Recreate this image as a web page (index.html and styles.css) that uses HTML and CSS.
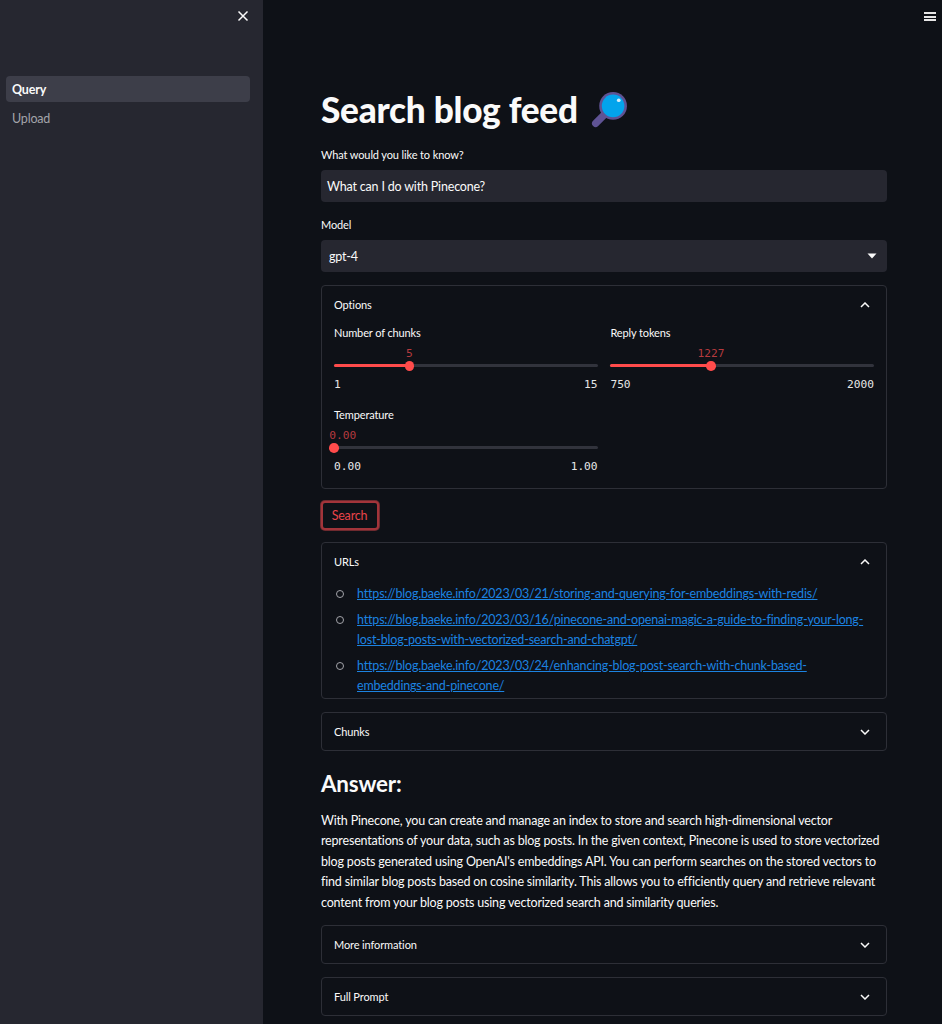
FILE: index.html
```html
<!DOCTYPE html>
<html>
<head>
    <title>Search blog feed</title>
    <link rel="stylesheet" href="styles.css">
</head>
<body>
    <div class="app">
        <aside class="sidebar">
            <button class="close-button" aria-label="Close">
                <svg viewBox="0 0 12 12" width="12" height="12"><path d="M1.5 1.5l9 9M10.5 1.5l-9 9" stroke="#fafafa" stroke-width="1.5" fill="none"/></svg>
            </button>
            <nav class="nav">
                <a class="nav-item active">Query</a>
                <a class="nav-item">Upload</a>
            </nav>
        </aside>

        <main class="main">
            <div class="menu-icon"><span></span><span></span><span></span></div>
            <div class="content">
                <h1>Search blog feed
                    <svg class="emoji" viewBox="0 0 36 36" width="37" height="37">
                        <path d="M14 22L4.5 31.5" stroke="#5f5394" stroke-width="7" stroke-linecap="round"/>
                        <circle cx="21.5" cy="14.5" r="13.5" fill="#5f5394"/>
                        <circle cx="21.5" cy="14.5" r="11" fill="#03a4ec"/>
                        <circle cx="27" cy="9" r="1.8" fill="#d5effb"/>
                    </svg>
                </h1>

                <label class="field-label">What would you like to know?</label>
                <div class="input">What can I do with Pinecone?</div>

                <label class="field-label model-label">Model</label>
                <div class="input select">
                    <span>gpt-4</span>
                    <svg viewBox="0 0 10 6" width="10" height="6"><path d="M0.5 0.5h9L5 5.5z" fill="#fafafa"/></svg>
                </div>

                <section class="expander options">
                    <div class="expander-head">
                        <span>Options</span>
                        <svg class="chevron" viewBox="0 0 10 6" width="10" height="6"><path d="M1 5l4-4 4 4" stroke="#fafafa" stroke-width="1.5" fill="none"/></svg>
                    </div>
                    <div class="sliders">
                        <div class="slider">
                            <div class="field-label">Number of chunks</div>
                            <div class="track">
                                <div class="fill" style="width: 28.6%"></div>
                                <div class="thumb" style="left: 28.6%"><span class="thumb-value">5</span></div>
                            </div>
                            <div class="range"><span>1</span><span>15</span></div>
                        </div>
                        <div class="slider">
                            <div class="field-label">Reply tokens</div>
                            <div class="track">
                                <div class="fill" style="width: 38.2%"></div>
                                <div class="thumb" style="left: 38.2%"><span class="thumb-value">1227</span></div>
                            </div>
                            <div class="range"><span>750</span><span>2000</span></div>
                        </div>
                        <div class="slider">
                            <div class="field-label">Temperature</div>
                            <div class="track">
                                <div class="fill" style="width: 0%"></div>
                                <div class="thumb" style="left: 0%"><span class="thumb-value at-start">0.00</span></div>
                            </div>
                            <div class="range"><span>0.00</span><span>1.00</span></div>
                        </div>
                    </div>
                </section>

                <button class="search-button">Search</button>

                <section class="expander urls">
                    <div class="expander-head">
                        <span>URLs</span>
                        <svg class="chevron" viewBox="0 0 10 6" width="10" height="6"><path d="M1 5l4-4 4 4" stroke="#fafafa" stroke-width="1.5" fill="none"/></svg>
                    </div>
                    <ul class="url-list">
                        <li><a href="#">https://blog.baeke.info/2023/03/21/storing-and-querying-for-embeddings-with-redis/</a></li>
                        <li><a href="#">https://blog.baeke.info/2023/03/16/pinecone-and-openai-magic-a-guide-to-finding-your-long-lost-blog-posts-with-vectorized-search-and-chatgpt/</a></li>
                        <li><a href="#">https://blog.baeke.info/2023/03/24/enhancing-blog-post-search-with-chunk-based-embeddings-and-pinecone/</a></li>
                    </ul>
                </section>

                <section class="expander closed">
                    <div class="expander-head">
                        <span>Chunks</span>
                        <svg class="chevron" viewBox="0 0 10 6" width="10" height="6"><path d="M1 1l4 4 4-4" stroke="#fafafa" stroke-width="1.5" fill="none"/></svg>
                    </div>
                </section>

                <h2>Answer:</h2>
                <p class="answer">With Pinecone, you can create and manage an index to store and search high-dimensional vector representations of your data, such as blog posts. In the given context, Pinecone is used to store vectorized blog posts generated using OpenAI's embeddings API. You can perform searches on the stored vectors to find similar blog posts based on cosine similarity. This allows you to efficiently query and retrieve relevant content from your blog posts using vectorized search and similarity queries.</p>

                <section class="expander closed">
                    <div class="expander-head">
                        <span>More information</span>
                        <svg class="chevron" viewBox="0 0 10 6" width="10" height="6"><path d="M1 1l4 4 4-4" stroke="#fafafa" stroke-width="1.5" fill="none"/></svg>
                    </div>
                </section>

                <section class="expander closed">
                    <div class="expander-head">
                        <span>Full Prompt</span>
                        <svg class="chevron" viewBox="0 0 10 6" width="10" height="6"><path d="M1 1l4 4 4-4" stroke="#fafafa" stroke-width="1.5" fill="none"/></svg>
                    </div>
                </section>
            </div>
        </main>
    </div>
</body>
</html>
```

FILE: styles.css
```css
* {
    box-sizing: border-box;
}

html, body {
    margin: 0;
    height: 100%;
    overflow: hidden;
}

body {
    font-family: "Lato", "Noto Sans", sans-serif;
    font-size: 12.5px;
    letter-spacing: -0.18px;
    line-height: 20.4px;
    color: #fafafa;
    background: #0e1117;
}

.app {
    display: flex;
    height: 1024px;
    overflow: hidden;
}

/* Sidebar */
.sidebar {
    flex: 0 0 263px;
    background: #262730;
    padding: 9px 13px 0 6px;
}

.close-button {
    display: block;
    margin-left: auto;
    width: 14px;
    height: 14px;
    padding: 1px;
    background: none;
    border: none;
}

.nav {
    margin-top: 53px;
    display: flex;
    flex-direction: column;
    gap: 3px;
}

.nav-item {
    display: block;
    height: 26px;
    line-height: 28px;
    padding: 0 6px;
    border-radius: 4px;
    color: #a3a4aa;
}

.nav-item.active {
    background: #3d3e49;
    color: #fafafa;
    font-weight: 700;
}

/* Main */
.main {
    flex: 1;
    padding: 89px 55px 0 58px;
    position: relative;
}

.menu-icon {
    position: absolute;
    top: 12px;
    right: 6px;
    width: 12px;
    display: flex;
    flex-direction: column;
    gap: 1.5px;
}

.menu-icon span {
    height: 2px;
    background: #e6e6e6;
}

h1 {
    margin: 0 0 17px;
    font-size: 35.2px;
    line-height: 40px;
    font-weight: 900;
    letter-spacing: -0.25px;
    display: flex;
    align-items: center;
    gap: 13px;
}

.field-label {
    display: block;
    font-size: 11px;
    letter-spacing: -0.12px;
    line-height: 17px;
    margin-bottom: 7px;
}

.input {
    height: 32px;
    line-height: 34px;
    padding: 0 6px;
    background: #262730;
    border-radius: 4px;
}

.model-label {
    margin-top: 14px;
}

.select {
    display: flex;
    justify-content: space-between;
    align-items: center;
    padding: 0 10px 0 8px;
}

.select span {
    padding-top: 2px;
    line-height: 20px;
}

/* Expanders */
.expander {
    border: 1px solid #2d2f37;
    border-radius: 4px;
    margin-top: 13px;
}

.expander-head {
    display: flex;
    justify-content: space-between;
    align-items: center;
    height: 37px;
    padding: 0 16px 0 12px;
    font-size: 11px;
    letter-spacing: -0.12px;
}

.expander-head span {
    padding-top: 2px;
}

.options {
    height: 204px;
}

.sliders {
    display: grid;
    grid-template-columns: 1fr 1fr;
    column-gap: 12.8px;
    padding: 1px 12px 0;
}

.slider {
    height: 82px;
}

.track {
    position: relative;
    height: 3.2px;
    margin-top: 23px;
    background: #31333c;
    border-radius: 2px;
}

.fill {
    height: 100%;
    background: #ff4b4b;
    border-radius: 2px;
}

.thumb {
    position: absolute;
    top: -3px;
    width: 9.6px;
    height: 9.6px;
    margin-left: -4.8px;
    border-radius: 50%;
    background: #ff4b4b;
}

.thumb-value {
    position: absolute;
    bottom: 11px;
    left: 50%;
    transform: translateX(-50%);
    font-family: "DejaVu Sans Mono", "Liberation Mono", monospace;
    font-size: 11.2px;
    letter-spacing: 0;
    line-height: 12px;
    color: #b53a3e;
}

.thumb-value.at-start {
    left: 0;
    transform: none;
}

.range {
    display: flex;
    justify-content: space-between;
    margin-top: 11px;
    font-family: "DejaVu Sans Mono", "Liberation Mono", monospace;
    font-size: 11.2px;
    letter-spacing: 0;
    line-height: 14px;
    color: #e6e6e6;
}

.search-button {
    display: block;
    margin-top: 12px;
    width: 58px;
    height: 29px;
    padding: 0 1px 0 0;
    border: 2px solid #a3343a;
    border-radius: 4px;
    box-shadow: 0 0 0 1px #6f2a2f;
    background: #0e1117;
    color: #e8444a;
    font-family: inherit;
    font-size: 12.5px;
    letter-spacing: -0.18px;
}

.urls {
    height: 157px;
    margin-top: 12px;
}

.url-list {
    list-style: none;
    margin: 0;
    padding: 4px 22px 0 35px;
}

.url-list li {
    position: relative;
    margin-bottom: 5.4px;
}

/* hollow bullet */
.url-list li::before {
    content: "";
    position: absolute;
    left: -21px;
    top: 6px;
    width: 6px;
    height: 6px;
    border: 1px solid #a3a4aa;
    border-radius: 50%;
}

.url-list a {
    color: #1c83e1;
}

h2 {
    margin: 19px 0 13px;
    font-size: 22.4px;
    line-height: 28px;
    font-weight: 700;
}

.answer {
    margin: 0;
}

.answer + .expander {
    margin-top: 12px;
}
```
